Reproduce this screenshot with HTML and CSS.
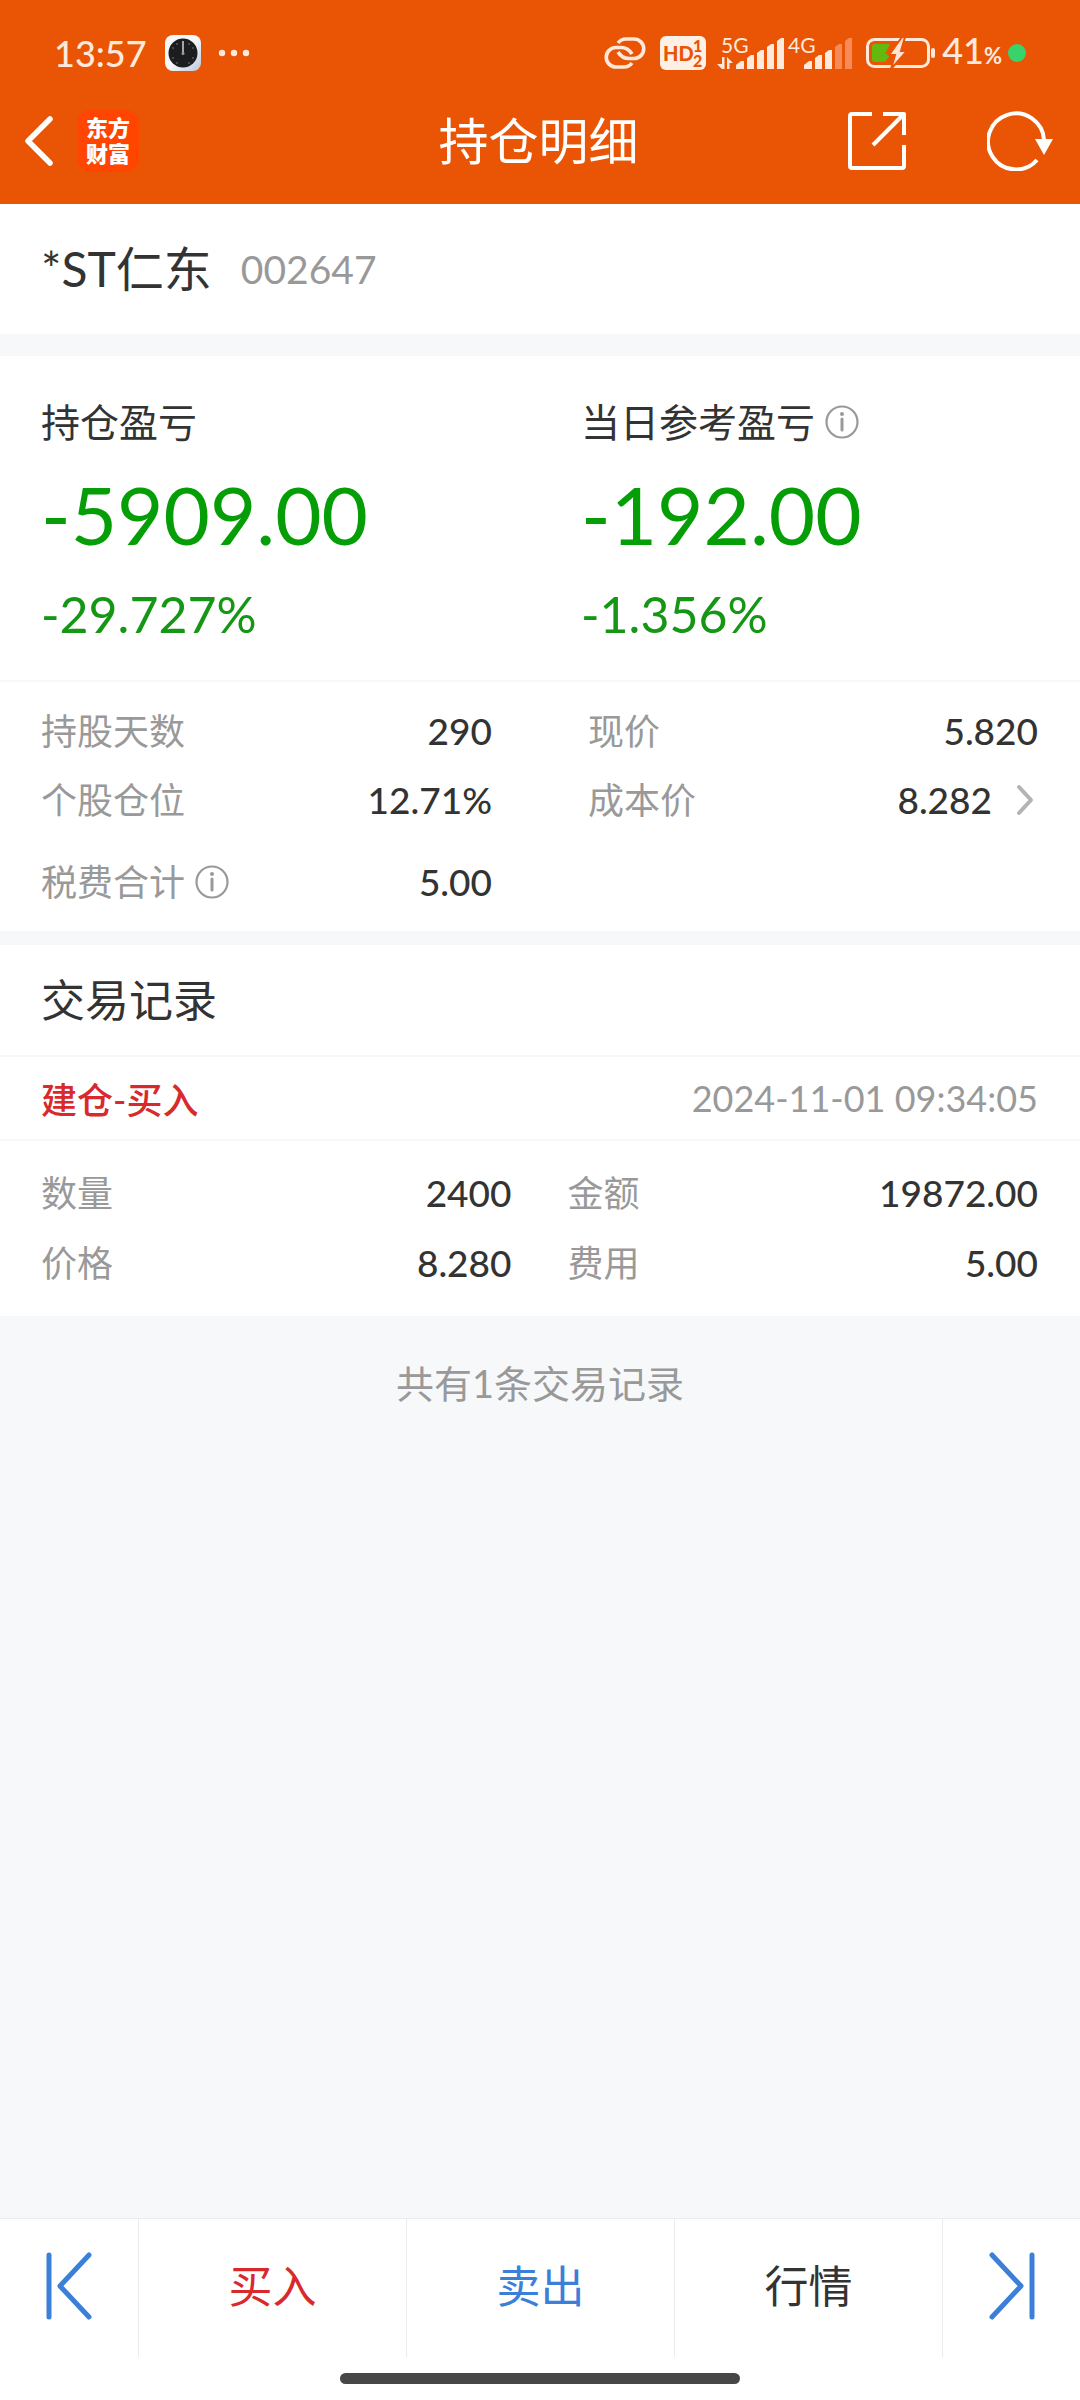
FILE: index.html
```html
<!DOCTYPE html>
<html lang="zh-CN">
<head>
<meta charset="utf-8">
<meta name="viewport" content="width=device-width">
<title>持仓明细</title>
<link rel="stylesheet" href="styles.css">
</head>
<body>
<header class="top">
  <div class="status">
    <span class="clock">13:57</span>
    <svg class="app-clock" width="36" height="36" viewBox="0 0 36 36" aria-hidden="true">
      <defs><linearGradient id="tile" x1="0" y1="0" x2="1" y2="1"><stop offset="0.5" stop-color="#f6f8fb"/><stop offset="1" stop-color="#bcc6dc"/></linearGradient></defs>
      <rect width="36" height="36" rx="8" fill="url(#tile)"/>
      <circle cx="18" cy="18" r="14.5" fill="#1c1d1e"/>
      <path d="M18 6v13" stroke="#c9c9c9" stroke-width="1.6"/>
      <g fill="#999"><circle cx="12" cy="9" r=".7"/><circle cx="24" cy="9" r=".7"/><circle cx="8" cy="13" r=".7"/><circle cx="28" cy="13" r=".7"/><circle cx="8" cy="23" r=".7"/><circle cx="28" cy="23" r=".7"/><circle cx="12" cy="28" r=".7"/><circle cx="24" cy="28" r=".7"/><circle cx="18" cy="18.500" r="1.500"/></g>
    </svg>
    <svg class="more" width="32" height="8" viewBox="0 0 32 8" fill="#ffe9dc" aria-hidden="true"><circle cx="4" cy="4" r="3.200"/><circle cx="16" cy="4" r="3.200"/><circle cx="28" cy="4" r="3.200"/></svg>
    <div class="status-right">
      <svg width="42" height="32" viewBox="0 0 42 32" fill="none" stroke="#ffe9dc" stroke-width="3.600" aria-hidden="true">
        <path d="M14 6Q17 2 22 2H30a9.750 9.750 0 0 1 0 19.500H25Q18 21.500 14 15"/>
        <path d="M28 26Q25 30 20 30H12a9.750 9.750 0 0 1 0-19.500H17Q24 10.500 28 17"/>
      </svg>
      <svg class="hd" width="46" height="34" viewBox="0 0 46 34" aria-hidden="true">
        <rect width="46" height="34" rx="6" fill="#fff0e7"/>
        <g fill="#e95504" font-weight="900"><text x="3" y="25" font-size="20">HD</text><text x="33" y="16" font-size="16">1</text><text x="33" y="31" font-size="16">2</text></g>
      </svg>
      <svg class="signal" width="70" height="46" viewBox="0 -6 70 46" fill="#ffe9dc" aria-hidden="true">
        <text x="4" y="17" font-size="21">5G</text>
        <path d="M5 21h2.500v12H5l-5-5h5zM10 21l6 6h-3.500v6H10z"/>
        <path d="M19 33v-4l5-4h3v8zM30 33V22l4-3h3v14zM40 33V17l4-3h3v19zM50 33V11l4-3h3v25zM60 33V5l4-3h3v31z"/>
      </svg>
      <svg width="66" height="46" viewBox="0 -6 66 46" fill="#ffe9dc" aria-hidden="true">
        <text x="1" y="17" font-size="21">4G</text>
        <path d="M17 33v-4l5-4h3v8zM28 33V22l4-3h3v14zM38 33V17l4-3h3v19z"/>
        <path fill="#f78a56" d="M48 33V11l4-3h3v25zM58 33V5l4-3h3v31z"/>
      </svg>
      <svg class="battery" width="70" height="32" viewBox="0 0 70 32" aria-hidden="true">
        <rect x="1.500" y="2.500" width="61" height="27" rx="7" fill="none" stroke="#ffe9dc" stroke-width="3"/>
        <path d="M9 7h15l-5 10h6l-6 8H9q-3 0-3-3V10q0-3 3-3z" fill="#64b90f"/>
        <path d="M36 0L23 18h6l-4 14 16-18h-6l4-14z" fill="#ffe3d6" stroke="#e95504" stroke-width="2"/>
        <rect x="65" y="11" width="4" height="10" rx="2" fill="#ffe9dc"/>
      </svg>
      <span class="percent">41<small>%</small></span>
      <span class="dot"></span>
    </div>
  </div>
  <nav class="nav">
    <div class="nav-left">
      <button class="icon-btn" aria-label="返回"><svg width="30" height="54" viewBox="0 0 30 54" fill="none" stroke="#fff" stroke-width="5.500" stroke-linecap="round" stroke-linejoin="round"><path d="M26 5L4 27l22 22"/></svg></button>
      <span class="logo"><span>东方</span><span>财富</span></span>
    </div>
    <h1 class="title">持仓明细</h1>
    <div class="nav-right">
      <button class="icon-btn" aria-label="分享"><svg width="60" height="60" viewBox="0 0 60 60" fill="none" stroke="#fff" stroke-width="4" stroke-linejoin="round"><path d="M25 3H5Q3 3 3 5V55q0 2 2 2H55q2 0 2-2V34M36 3H57V24M57 3L26 34"/></svg></button>
      <button class="icon-btn" aria-label="刷新"><svg width="66" height="60" viewBox="0 0 66 60" fill="none" stroke="#fff" stroke-width="4"><path d="M50 49A28 28 0 1 1 57 29"/><path d="M48 28H66L57 44z" fill="#fff" stroke="none"/></svg></button>
    </div>
  </nav>
</header>

<main class="main">
  <section class="stock"><h2 class="name">*ST仁东</h2><span class="code">002647</span></section>

  <section class="profit">
    <div>
      <h3 class="profit-label">持仓盈亏</h3>
      <p class="amount">-5909.00</p>
      <p class="rate">-29.727%</p>
    </div>
    <div>
      <h3 class="profit-label">当日参考盈亏
        <svg class="info" width="34" height="34" viewBox="0 0 34 34" fill="none" stroke="#999" stroke-width="2.200"><circle cx="17" cy="17" r="15.500"/><circle cx="17" cy="9" r="2" fill="#999" stroke="none"/><path d="M17 14v11" stroke-width="3" stroke-linecap="round"/></svg>
      </h3>
      <p class="amount">-192.00</p>
      <p class="rate">-1.356%</p>
    </div>
  </section>

  <section class="stats">
    <dl class="col">
      <div class="row"><dt>持股天数</dt><dd>290</dd></div>
      <div class="row"><dt>个股仓位</dt><dd>12.71%</dd></div>
      <div class="row row-fee"><dt>税费合计
        <svg class="info" width="34" height="34" viewBox="0 0 34 34" fill="none" stroke="#999" stroke-width="2.200"><circle cx="17" cy="17" r="15.500"/><circle cx="17" cy="9" r="2" fill="#999" stroke="none"/><path d="M17 14v11" stroke-width="3" stroke-linecap="round"/></svg>
      </dt><dd>5.00</dd></div>
    </dl>
    <dl class="col">
      <div class="row"><dt>现价</dt><dd>5.820</dd></div>
      <div class="row"><dt>成本价</dt><dd>8.282
        <svg class="arrow" width="18" height="32" viewBox="0 0 18 32" fill="none" stroke="#b3b3b3" stroke-width="4" stroke-linecap="round" stroke-linejoin="round"><path d="M3 3l12 13L3 29"/></svg>
      </dd></div>
    </dl>
  </section>

  <section class="records">
    <h2 class="records-title">交易记录</h2>
    <div class="record-head"><strong class="kind">建仓-买入</strong><time class="time">2024-11-01 09:34:05</time></div>
    <div class="record-body">
      <dl class="col">
        <div class="row"><dt>数量</dt><dd>2400</dd></div>
        <div class="row"><dt>价格</dt><dd>8.280</dd></div>
      </dl>
      <dl class="col">
        <div class="row"><dt>金额</dt><dd>19872.00</dd></div>
        <div class="row"><dt>费用</dt><dd>5.00</dd></div>
      </dl>
    </div>
  </section>
  <p class="count">共有1条交易记录</p>
</main>

<footer class="bottom">
  <div class="tabs">
    <button class="tab" aria-label="上一个"><svg width="46" height="68" viewBox="0 0 46 68" fill="none" stroke="#3b7fd9" stroke-width="5" stroke-linecap="round" stroke-linejoin="round"><path d="M3 3v62M43 3L14 34l29 31"/></svg></button>
    <button class="tab buy">买入</button>
    <button class="tab sell">卖出</button>
    <button class="tab">行情</button>
    <button class="tab" aria-label="下一个"><svg width="46" height="68" viewBox="0 0 46 68" fill="none" stroke="#3b7fd9" stroke-width="5" stroke-linecap="round" stroke-linejoin="round"><path d="M43 3v62M3 3l29 31L3 65"/></svg></button>
  </div>
  <div class="home"></div>
</footer>
</body>
</html>
```
FILE: styles.css
```css
* { box-sizing: border-box; }
body {
  margin: 0;
  min-height: 100vh;
  display: flex;
  flex-direction: column;
  background: #f7f8fa;
  color: #333;
  font-family: Lato, "Noto Sans CJK SC", sans-serif;
}
h1, h2, h3, p, dl, dd { margin: 0; font-weight: 400; }
button { padding: 0; border: 0; background: none; color: inherit; font: inherit; }
svg { display: block; flex: none; }

.top { background: #e95504; color: #fff; }
.status {
  height: 78px;
  padding: 28px 54px 0;
  display: flex;
  align-items: center;
  color: #ffe9dc;
}
.clock { font-size: 36px; font-weight: 500; line-height: 48px; }
.app-clock { margin-left: 18px; }
.more { margin-left: 17px; }
.status-right { margin-left: auto; display: flex; align-items: center; }
.hd { margin-left: 14px; }
.signal { margin-left: 11px; }
.battery { margin-left: 13px; }
.percent { margin-left: 6px; font-size: 36px; font-weight: 500; line-height: 48px; }
.percent small { font-size: 22px; font-weight: 700; }
.dot { margin-left: 6px; width: 18px; height: 18px; border-radius: 50%; background: #38d36b; }

.nav {
  height: 126px;
  padding: 0 27px 0 24px;
  display: grid;
  grid-template-columns: 1fr auto 1fr;
  align-items: center;
}
.nav-left, .nav-right { display: flex; align-items: center; }
.nav-left { gap: 23px; }
.nav-right { justify-content: flex-end; gap: 80px; }
.title { font-size: 50px; line-height: 60px; }
.logo {
  width: 62px;
  height: 62px;
  border-radius: 14px;
  background: #ff4500;
  display: flex;
  flex-direction: column;
  align-items: center;
  justify-content: center;
  font-size: 22px;
  font-weight: 900;
  line-height: 26px;
}

.main { flex: 1; }
.stock {
  height: 130px;
  padding: 0 41px;
  display: flex;
  align-items: center;
  gap: 29px;
  background: #fff;
}
.name { font-size: 48px; line-height: 60px; }
.code { font-size: 39px; line-height: 60px; color: #999; }

.profit {
  margin-top: 22px;
  padding: 40px 0 30px;
  display: grid;
  grid-template-columns: 1fr 1fr;
  background: #fff;
  border-bottom: 2px solid #f7f8fa;
}
.profit > div { padding-left: 41px; }
.profit-label { display: flex; align-items: center; gap: 10px; font-size: 39px; line-height: 52px; }
.amount { margin-top: 16px; font-size: 80px; line-height: 100px; color: #069e06; }
.rate { margin-top: 14px; font-size: 50px; line-height: 72px; color: #159615; }

.stats {
  padding: 14px 42px 1px 41px;
  display: grid;
  grid-template-columns: 451px 1fr;
  column-gap: 96px;
  background: #fff;
}
.row { height: 69px; display: flex; align-items: center; justify-content: space-between; font-size: 37px; line-height: 48px; }
.row-fee { height: 96px; }
dt { display: flex; align-items: center; gap: 10px; font-size: 36px; color: #999; }
dd { display: flex; align-items: center; gap: 24px; font-weight: 500; }
.arrow { margin-right: 4px; }

.records { margin-top: 14px; background: #fff; }
.records-title { padding: 0 41px; font-size: 44px; line-height: 110px; }
.record-head {
  height: 86px;
  padding: 0 42px 0 41px;
  display: flex;
  align-items: center;
  justify-content: space-between;
  border: solid #f7f8fa;
  border-width: 2px 0;
}
.kind { font-size: 36px; font-weight: 500; color: #d8292c; }
.time { font-size: 36px; color: #999; }
.record-body {
  padding: 17px 42px 18px 41px;
  display: grid;
  grid-template-columns: 1fr 1fr;
  column-gap: 56px;
}
.record-body .row { height: 70px; }
.count { padding-top: 40px; text-align: center; font-size: 38px; line-height: 54px; color: #999; }

.bottom { background: #fff; border-top: 1px solid #ececec; }
.tabs { height: 138px; display: grid; grid-template-columns: 138px 1fr 1fr 1fr 138px; }
.tab { padding-bottom: 4px; display: flex; align-items: center; justify-content: center; font-size: 44px; line-height: 60px; }
.tab + .tab { border-left: 1px solid #ececec; }
.buy { color: #d8292c; }
.sell { color: #3b7fd9; }
.home { width: 37%; height: 11px; margin: 16px auto; border-radius: 6px; background: #474747; }
```
